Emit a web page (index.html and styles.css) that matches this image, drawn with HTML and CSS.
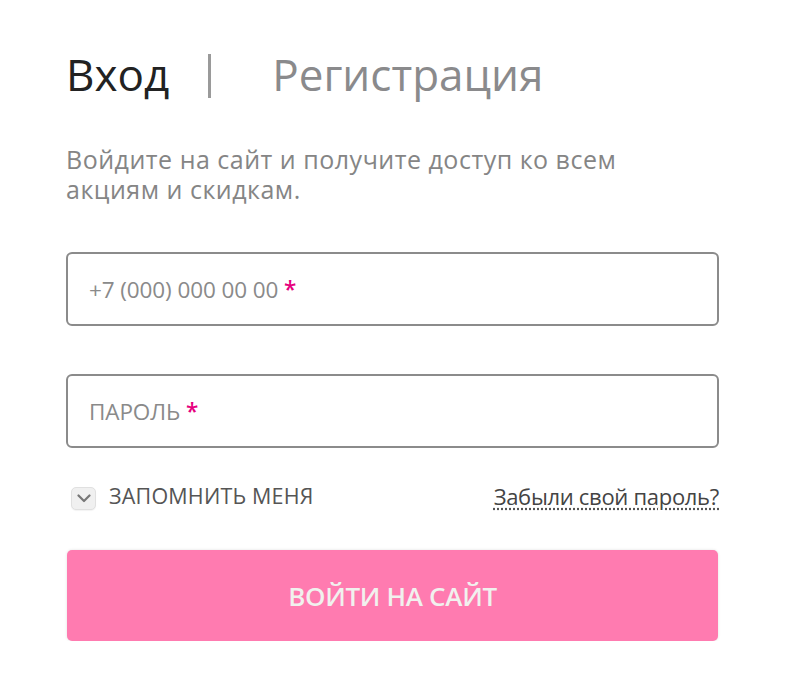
FILE: index.html
```html
<!DOCTYPE html>
<html lang="ru">
<head>
    <meta charset="UTF-8">
    <meta name="viewport" content="width=device-width, initial-scale=1.0">
    <title>Вход</title>
    <link rel="stylesheet" href="styles.css">
</head>
<body>
    <div class="auth">
        <div class="tabs">
            <span class="tab tab-active">Вход</span>
            <span class="tab-sep"></span>
            <span class="tab">Регистрация</span>
        </div>

        <p class="lead">
            <span class="lead-line">Войдите на сайт и получите доступ ко всем</span>
            <span class="lead-line">акциям и скидкам.</span>
        </p>

        <form class="form">
            <label class="field">
                <span class="field-ph">+7 (000) 000 00 00 <i>*</i></span>
            </label>
            <label class="field">
                <span class="field-ph">ПАРОЛЬ <i>*</i></span>
            </label>

            <div class="row">
                <label class="remember">
                    <span class="check">
                        <svg width="14" height="9" viewBox="0 0 14 9"><path d="M1.5 1.5 L7 7 L12.5 1.5" fill="none" stroke="#777" stroke-width="2.2" stroke-linecap="round" stroke-linejoin="round"/></svg>
                    </span>
                    <span class="remember-text">ЗАПОМНИТЬ МЕНЯ</span>
                </label>
                <a class="forgot" href="#">Забыли свой пароль?</a>
            </div>

            <button class="submit" type="button">ВОЙТИ НА САЙТ</button>
        </form>
    </div>
</body>
</html>
```

FILE: styles.css
```css
*{
    margin: 0;
    padding: 0;
    box-sizing: border-box;
}
body{
    background: #fff;
    font-family: "Open Sans", "Noto Sans", sans-serif;
    color: #555;
}
.auth{
    width: 653px;
    margin-left: 66px;
    padding-top: 42px;
}
.tabs{
    display: flex;
    align-items: center;
    height: 64px;
}
.tab{
    font-size: 44px;
    color: #8a8a8c;
    line-height: 1;
}
.tab-active{
    color: #222;
}
.tab-sep{
    width: 3px;
    height: 44px;
    background: #9a9a9a;
    margin: 4px 61px 0 39px;
}
.lead{
    margin-top: 38px;
    font-size: 25px;
    color: #858585;
    letter-spacing: 0.5px;
}
.lead-line{
    display: block;
    height: 30px;
    line-height: 30px;
}
.form{
    margin-top: 48px;
}
.field{
    display: flex;
    align-items: center;
    height: 74px;
    border: 2px solid #8b8b8b;
    border-radius: 6px;
    padding-left: 21px;
    margin-bottom: 48px;
}
.field:nth-child(2){
    margin-bottom: 0;
}
.field-ph{
    font-size: 22.5px;
    color: #8a8a8a;
    letter-spacing: -0.1px;
}
.field-ph i{
    font-style: normal;
    color: #e6007e;
    font-weight: 600;
}
.row{
    display: flex;
    justify-content: space-between;
    align-items: center;
    height: 102px;
    padding-bottom: 2px;
}
.remember{
    display: flex;
    align-items: center;
    font-size: 21.5px;
    color: #555;
    padding-left: 5px;
    letter-spacing: 0.2px;
}
.remember-text{
    margin-bottom: 5px;
}
.check{
    display: flex;
    align-items: center;
    justify-content: center;
    width: 25px;
    height: 23px;
    background: #f0f0f0;
    border: 1px solid #e0e0e0;
    border-radius: 5px;
    box-shadow: 0 1px 1px rgba(0,0,0,0.05);
    margin-right: 13px;
}
.forgot{
    font-size: 22px;
    color: #444;
    letter-spacing: -0.3px;
    text-decoration: underline dotted #555;
    text-underline-offset: 4px;
    margin-bottom: 5px;
}
.submit{
    display: block;
    width: 651px;
    height: 91px;
    margin-left: 1px;
    border: none;
    border-radius: 5px;
    background: #ff7bb0;
    box-shadow: 0 0 3px rgba(0,0,0,0.12);
    color: #f1f1ee;
    font-family: "Open Sans", "Noto Sans", sans-serif;
    font-size: 26px;
    font-weight: 600;
    letter-spacing: -0.3px;
}
```
